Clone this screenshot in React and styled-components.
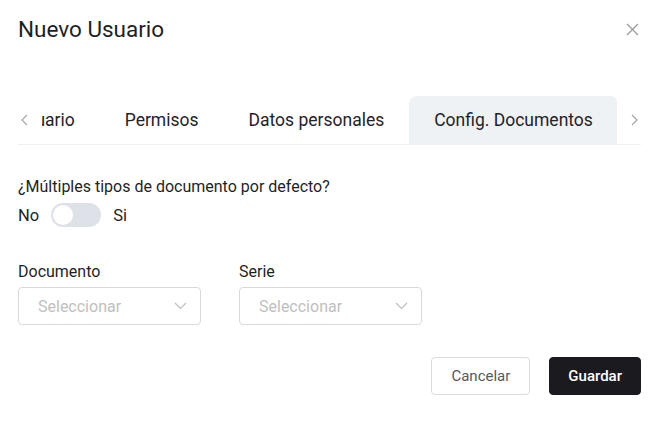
import React from 'react';
import styled, { createGlobalStyle } from 'styled-components';

const GlobalStyle = createGlobalStyle`
  body {
    margin: 0;
    background: #ffffff;
    font-family: Roboto, 'Liberation Sans', sans-serif;
    color: #1f1f1f;
  }
`;

const Modal = styled.div`
  width: 659px;
  box-sizing: border-box;
  padding: 0 18px;
`;

const Header = styled.div`
  height: 58px;
  display: flex;
  align-items: center;
  justify-content: space-between;
`;

const Title = styled.h1`
  margin: 0;
  font-size: 22.5px;
  font-weight: 400;
  color: #1f1f1f;
`;

const CloseButton = styled.button`
  border: 0;
  background: none;
  padding: 0;
  margin-right: 2px;
  width: 14px;
  height: 14px;
  display: flex;
  align-items: center;
  justify-content: center;
  cursor: pointer;
`;

const TabNav = styled.div`
  margin-top: 38px;
  display: flex;
  align-items: stretch;
  height: 48px;
  border-bottom: 1.5px solid #eef0f2;
`;

const ArrowButton = styled.button`
  flex: 0 0 24px;
  border: 0;
  background: none;
  padding: 0;
  display: flex;
  align-items: center;
  justify-content: ${(p) => (p.side === 'left' ? 'flex-start' : 'flex-end')};
  padding-left: ${(p) => (p.side === 'left' ? '3px' : '0')};
  padding-right: ${(p) => (p.side === 'right' ? '3px' : '0')};
  cursor: pointer;
`;

const TabViewport = styled.div`
  flex: 1;
  overflow: hidden;
`;

const TabList = styled.div`
  display: flex;
  height: 100%;
  margin-left: ${(p) => p.offset}px;
`;

const Tab = styled.div`
  flex: 0 0 auto;
  padding: 0 25px;
  display: flex;
  align-items: center;
  font-size: 17.5px;
  color: #1f2329;
  white-space: nowrap;
  border-radius: 8px 8px 0 0;
  background: ${(p) => (p.active ? '#eff2f4' : 'transparent')};
`;

const Body = styled.div`
  padding-top: 32px;
`;

const Label = styled.div`
  font-size: 16px;
  line-height: 20px;
  color: #1f1f1f;
`;

const ToggleRow = styled.div`
  margin-top: 6px;
  display: flex;
  align-items: center;
  gap: 12px;
  font-size: 16.5px;
  color: #1f1f1f;
`;

const Switch = styled.div`
  width: 50px;
  height: 24px;
  border-radius: 12px;
  background: #dfe1e8;
  position: relative;
`;

const Knob = styled.span`
  position: absolute;
  top: 2px;
  left: 2px;
  width: 20px;
  height: 20px;
  border-radius: 50%;
  background: #ffffff;
`;

const FieldRow = styled.div`
  margin-top: 35px;
  display: flex;
  gap: 38px;
`;

const Field = styled.div`
  width: 183px;
  display: flex;
  flex-direction: column;
  gap: 5px;
`;

const Select = styled.div`
  height: 38px;
  box-sizing: border-box;
  border: 1px solid #d9d9d9;
  border-radius: 4px;
  padding: 0 13px 0 19px;
  display: flex;
  align-items: center;
  justify-content: space-between;
  font-size: 16px;
  color: #bfbfbf;
`;

const Footer = styled.div`
  margin-top: 32px;
  display: flex;
  justify-content: flex-end;
  gap: 19px;
`;

const Button = styled.button`
  height: 38px;
  box-sizing: border-box;
  border-radius: 4px;
  font-family: Roboto, 'Liberation Sans', sans-serif;
  font-size: 15px;
  cursor: pointer;
  padding: 0 ${(p) => (p.primary ? '18px' : '19px')};
  border: 1px solid ${(p) => (p.primary ? '#1b1b1f' : '#dcdcdc')};
  background: ${(p) => (p.primary ? '#1b1b1f' : '#ffffff')};
  color: ${(p) => (p.primary ? '#ffffff' : '#595959')};
  font-weight: ${(p) => (p.primary ? 500 : 400)};
`;

const Chevron = ({ dir, color = '#a6a6a6' }) => {
  const d = {
    left: 'M6 1 L1 6 L6 11',
    right: 'M1 1 L6 6 L1 11',
  }[dir];
  return (
    <svg width='7' height='12' viewBox='0 0 7 12' fill='none'>
      <path d={d} stroke={color} strokeWidth='1.2' />
    </svg>
  );
};

const DownArrow = () => (
  <svg width='13' height='8' viewBox='0 0 13 8' fill='none'>
    <path d='M1 1 L6.5 6.5 L12 1' stroke='#bfbfbf' strokeWidth='1.2' />
  </svg>
);

const tabs = ['Usuario', 'Permisos', 'Datos personales', 'Config. Documentos'];

export default function App() {
  return (
    <>
      <GlobalStyle />
      <Modal>
        <Header>
          <Title>Nuevo Usuario</Title>
          <CloseButton aria-label='close'>
            <svg width='13' height='13' viewBox='0 0 13 13'>
              <path d='M1 1 L12 12 M12 1 L1 12' stroke='#9a9a9a' strokeWidth='1.3' />
            </svg>
          </CloseButton>
        </Header>

        <TabNav>
          <ArrowButton side='left'>
            <Chevron dir='left' />
          </ArrowButton>
          <TabViewport>
            <TabList offset={-52}>
              {tabs.map((t, i) => (
                <Tab key={t} active={i === tabs.length - 1}>
                  {t}
                </Tab>
              ))}
            </TabList>
          </TabViewport>
          <ArrowButton side='right'>
            <Chevron dir='right' />
          </ArrowButton>
        </TabNav>

        <Body>
          <Label>¿Múltiples tipos de documento por defecto?</Label>
          <ToggleRow>
            <span>No</span>
            <Switch>
              <Knob />
            </Switch>
            <span>Si</span>
          </ToggleRow>

          <FieldRow>
            <Field>
              <Label>Documento</Label>
              <Select>
                Seleccionar
                <DownArrow />
              </Select>
            </Field>
            <Field>
              <Label>Serie</Label>
              <Select>
                Seleccionar
                <DownArrow />
              </Select>
            </Field>
          </FieldRow>

          <Footer>
            <Button>Cancelar</Button>
            <Button primary>Guardar</Button>
          </Footer>
        </Body>
      </Modal>
    </>
  );
}
